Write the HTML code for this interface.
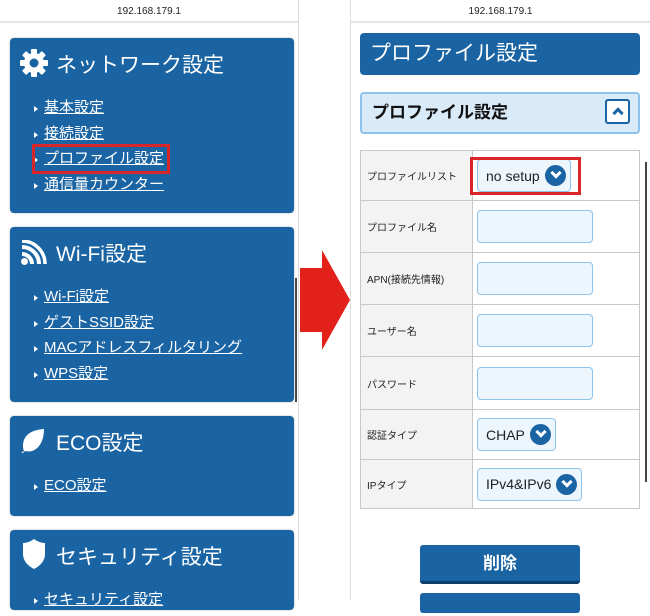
<!DOCTYPE html>
<html><head><meta charset="utf-8"><style>
*{margin:0;padding:0;box-sizing:border-box}
body{width:650px;height:600px;background:#fff;position:relative;overflow:hidden;font-family:"Liberation Sans","Noto Sans CJK JP",sans-serif}
.abs{position:absolute}
.bar{height:23px;border-bottom:2px solid #e4e4e4;font-size:10px;text-align:center;line-height:23px;color:#222}
.card{position:absolute;left:10px;width:284px;background:#1a64a4;border-radius:4px;box-shadow:0 0 2px #bbb;color:#fff}
.card h2{font-weight:normal;font-size:21px;position:absolute;left:46px;top:11px;white-space:nowrap}
.card ul{list-style:none;position:absolute;left:24px}
.card li{font-size:15px;height:25.5px;line-height:20px;position:relative;padding-left:10px}
.card li:before{content:"";position:absolute;left:0;top:8px;border-left:4px solid #fff;border-top:3px solid transparent;border-bottom:3px solid transparent}
.card li span{text-decoration:underline}
.red{position:absolute;border:3px solid #d9262b}
table{border-collapse:collapse}
td{border:1px solid #c8c8c8}
.lab{background:#f3f3f3;font-size:10px;padding-left:6px;width:112px;color:#222}
.in{display:inline-block;width:116px;height:33px;border:1.5px solid #8cc4ee;border-radius:4px;background:#eef6fd;margin-left:4px;vertical-align:middle}
.sel{display:inline-flex;align-items:center;height:33px;border:1.5px solid #8cc4ee;border-radius:4px;background:#eef6fd;margin-left:4px;padding:0 4px 0 8px;font-size:14px;color:#222;vertical-align:middle}
.dd{width:21px;height:21px;border-radius:50%;background:#1a64a4;margin-left:5px;position:relative}
.dd:after{content:"";position:absolute;left:7px;top:4px;width:5px;height:5px;border-right:3px solid #fff;border-bottom:3px solid #fff;transform:rotate(45deg)}
</style></head><body>
<div class="abs" style="left:0;top:0;width:299px;height:600px;border-right:1px solid #ddd">
<div class="bar">192.168.179.1</div></div>
<div class="abs" style="left:295px;top:278px;width:2px;height:124px;background:#444"></div>

<div class="card" style="top:38px;height:175px">
<svg class="abs" style="left:9px;top:10px" width="30" height="30" viewBox="0 0 30 30"><g fill="#fff"><circle cx="15" cy="15" r="10"/><rect x="12" y="1" width="6" height="28" rx="1"/><rect x="12" y="1" width="6" height="28" rx="1" transform="rotate(45 15 15)"/><rect x="12" y="1" width="6" height="28" rx="1" transform="rotate(90 15 15)"/><rect x="12" y="1" width="6" height="28" rx="1" transform="rotate(135 15 15)"/></g><circle cx="15" cy="15" r="4.5" fill="#1a64a4"/></svg>
<h2>ネットワーク設定</h2>
<ul style="top:60px"><li><span>基本設定</span></li><li><span>接続設定</span></li><li><span>プロファイル設定</span></li><li><span>通信量カウンター</span></li></ul>
</div>
<div class="red" style="left:32px;top:144px;width:138px;height:30px"></div>

<div class="card" style="top:227px;height:175px">
<svg class="abs" style="left:10px;top:13px" width="28" height="26" viewBox="0 0 28 26"><g fill="none" stroke="#fff" stroke-width="4"><path d="M2 14a10 10 0 0 1 10 10"/><path d="M2 7a17 17 0 0 1 17 17"/><path d="M2 1a23 23 0 0 1 23 23" stroke-width="3.5"/></g><circle cx="4.5" cy="21.5" r="3.5" fill="#fff"/></svg>
<h2>Wi-Fi設定</h2>
<ul style="top:60px"><li><span>Wi-Fi設定</span></li><li><span>ゲストSSID設定</span></li><li><span>MACアドレスフィルタリング</span></li><li><span>WPS設定</span></li></ul>
</div>

<div class="card" style="top:416px;height:100px">
<svg class="abs" style="left:10px;top:12px" width="26" height="26" viewBox="0 0 26 26"><path d="M24 1C10 2 3 8 3 18c0 3 1 5 1 5l-3 2h2l2-2s3 1 7 0C21 20 24 10 24 1z" fill="#fff"/></svg>
<h2>ECO設定</h2>
<ul style="top:60px"><li><span>ECO設定</span></li></ul>
</div>

<div class="card" style="top:530px;height:80px">
<svg class="abs" style="left:12px;top:9px" width="24" height="30" viewBox="0 0 24 30"><path d="M12 0C8 3 4 4 1 4v11c0 7 5 12 11 15 6-3 11-8 11-15V4c-3 0-7-1-11-4z" fill="#fff"/></svg>
<h2>セキュリティ設定</h2>
<ul style="top:60px"><li><span>セキュリティ設定</span></li></ul>
</div>

<svg class="abs" style="left:300px;top:250px" width="50" height="100" viewBox="0 0 50 100"><path d="M0 18h22V0l28 50-28 50V82H0z" fill="#e3211b"/></svg>

<div class="abs" style="left:350px;top:0;width:300px;height:600px;border-left:1px solid #ddd">
<div class="bar">192.168.179.1</div></div>
<div class="abs" style="left:645px;top:162px;width:2px;height:320px;background:#444"></div>

<div class="abs" style="left:360px;top:33px;width:280px;height:42px;background:#1a64a4;border-radius:4px;color:#fff;font-size:21px;line-height:42px;padding-left:10px">プロファイル設定</div>

<div class="abs" style="left:360px;top:92px;width:280px;height:42px;background:#d9eaf9;border:2px solid #8cc4ee;border-radius:4px;font-size:17px;font-weight:bold;line-height:38px;padding-left:10px;color:#111">プロファイル設定
<div class="abs" style="right:8px;top:5px;width:25px;height:25px;border:2px solid #1a64a4;border-radius:3px;background:#fff"><div class="abs" style="left:7px;top:8px;width:8px;height:8px;border-left:3px solid #1a64a4;border-top:3px solid #1a64a4;transform:rotate(45deg)"></div></div>
</div>

<table class="abs" style="left:360px;top:150px;width:280px">
<tr style="height:50px"><td class="lab">プロファイルリスト</td><td><span class="sel">no setup<span class="dd"></span></span></td></tr>
<tr style="height:52px"><td class="lab">プロファイル名</td><td><span class="in"></span></td></tr>
<tr style="height:52px"><td class="lab">APN(接続先情報)</td><td><span class="in"></span></td></tr>
<tr style="height:52px"><td class="lab">ユーザー名</td><td><span class="in"></span></td></tr>
<tr style="height:53px"><td class="lab">パスワード</td><td><span class="in"></span></td></tr>
<tr style="height:50px"><td class="lab">認証タイプ</td><td><span class="sel">CHAP<span class="dd"></span></span></td></tr>
<tr style="height:49px"><td class="lab">IPタイプ</td><td><span class="sel">IPv4&amp;IPv6<span class="dd"></span></span></td></tr>
</table>
<div class="red" style="left:470px;top:157px;width:111px;height:38px"></div>

<div class="abs" style="left:420px;top:545px;width:160px;height:39px;background:#1a64a4;border-radius:3px;border-bottom:3px solid #0e3f6a;color:#fff;font-size:17px;font-weight:bold;text-align:center;line-height:38px">削除</div>
<div class="abs" style="left:420px;top:593px;width:160px;height:20px;background:#1a64a4;border-radius:3px"></div>
</body></html>
